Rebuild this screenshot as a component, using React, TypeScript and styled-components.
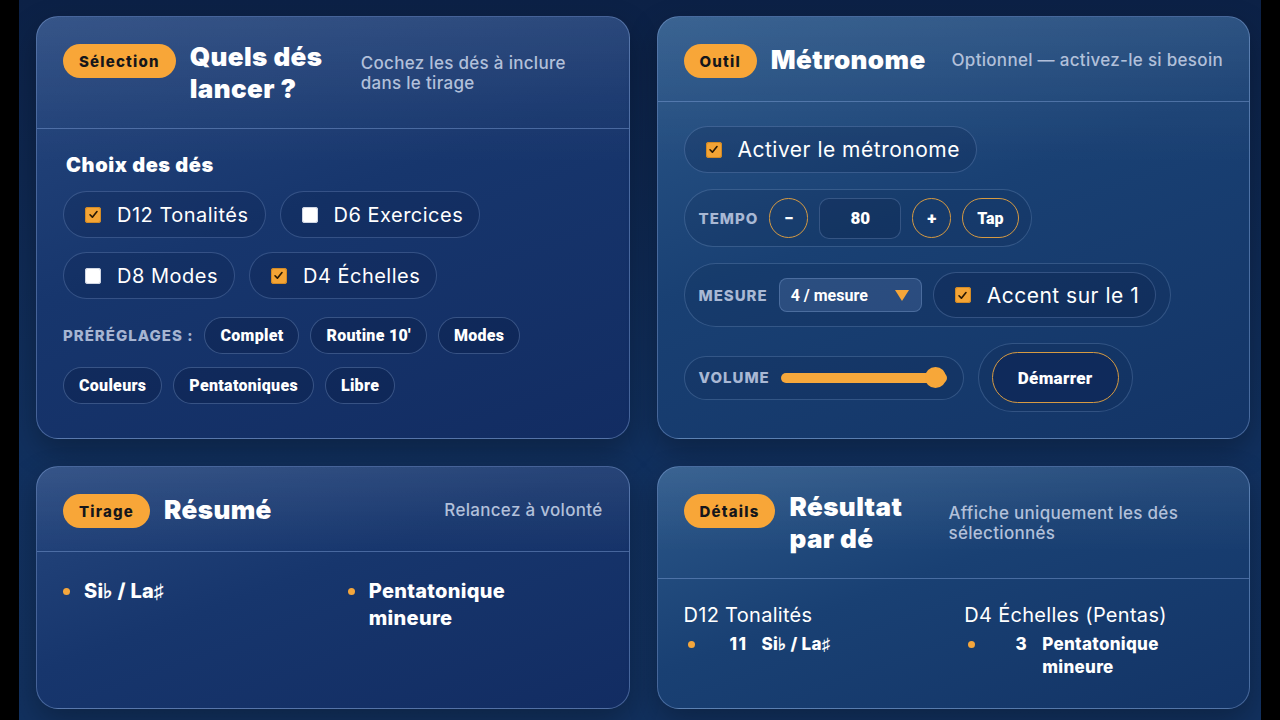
import React from 'react';
import styled, { createGlobalStyle } from 'styled-components';

const GlobalStyle = createGlobalStyle`
  html, body {
    margin: 0;
    padding: 0;
    background: #000;
  }
  body {
    font-family: Inter, "Noto Sans", sans-serif;
    color: #fff;
  }
  * {
    box-sizing: border-box;
  }
`;

const Screen = styled.div`
  width: 1242px;
  height: 720px;
  margin-left: 19px;
  overflow: hidden;
  padding: 16px 11px 0 17px;
  background: linear-gradient(180deg, #0c2146 0%, #11305e 60%, #12315f 100%);
  display: grid;
  grid-template-columns: 1fr 1fr;
  grid-template-rows: 423px 243px;
  gap: 27px;
`;

const Card = styled.section<{ $tone?: 'blue' | 'teal' }>`
  border-radius: 22px;
  border: 1px solid rgba(140, 172, 225, 0.42);
  box-shadow: 0 12px 30px rgba(0, 0, 0, 0.28);
  overflow: hidden;
  display: flex;
  flex-direction: column;
  background: ${(p) =>
    p.$tone === 'teal'
      ? 'linear-gradient(180deg, rgba(255,255,255,0.07), rgba(255,255,255,0) 35%), linear-gradient(160deg, #2c588a 0%, #194073 45%, #133466 100%)'
      : 'linear-gradient(180deg, rgba(255,255,255,0.07), rgba(255,255,255,0) 35%), linear-gradient(160deg, #27487f 0%, #17366d 45%, #122c62 100%)'};
`;

const CardHeader = styled.header`
  display: flex;
  align-items: center;
  padding: 24px 26px 23px;
  border-bottom: 1px solid rgba(130, 165, 220, 0.45);
`;

const Badge = styled.span`
  align-self: flex-start;
  flex-shrink: 0;
  height: 34px;
  padding: 0 16px;
  margin: 3px 14px 0 0;
  border-radius: 17px;
  background: #f8a638;
  color: #15161b;
  font-size: 15px;
  font-weight: 800;
  letter-spacing: 1.2px;
  display: inline-flex;
  align-items: center;
`;

const Title = styled.h2<{ $width?: number }>`
  margin: 0;
  flex: 0 0 auto;
  width: ${(p) => (p.$width ? `${p.$width}px` : 'auto')};
  font-size: 26px;
  font-weight: 900;
  line-height: 32px;
  letter-spacing: 0.4px;
  color: #fff;
`;

const Subtitle = styled.p`
  margin: 0 0 0 auto;
  padding-left: 17px;
  flex: 0 1 auto;
  font-size: 17px;
  font-weight: 500;
  line-height: 20px;
  letter-spacing: 0.3px;
  color: #b2c0da;
`;

const CardBody = styled.div<{ $pad?: string }>`
  padding: ${(p) => p.$pad || '24px 26px'};
  flex: 1;
`;

const SectionTitle = styled.h3`
  margin: 0 0 14px 3px;
  font-size: 20px;
  font-weight: 900;
  line-height: 24px;
  letter-spacing: 0.6px;
`;

const ChipWrap = styled.div`
  display: flex;
  flex-wrap: wrap;
  gap: 14px;
`;

const CheckChip = styled.label<{ $h?: number; $size?: number }>`
  display: inline-flex;
  align-items: center;
  gap: 16px;
  height: ${(p) => p.$h || 47}px;
  padding: 0 16px 0 21px;
  border-radius: 24px;
  border: 1px solid rgba(150, 182, 232, 0.26);
  background: rgba(8, 24, 60, 0.18);
  font-size: ${(p) => p.$size || 20}px;
  font-weight: 400;
  letter-spacing: 0.5px;
  color: #fff;
  white-space: nowrap;
`;

const Box = styled.span<{ $on?: boolean }>`
  width: 16px;
  height: 16px;
  border-radius: 3px;
  flex-shrink: 0;
  display: inline-flex;
  align-items: center;
  justify-content: center;
  background: ${(p) => (p.$on ? '#f4a435' : '#ffffff')};
  box-shadow: inset 0 0 0 1px ${(p) => (p.$on ? '#d38a24' : '#cfd6e4')};
`;

const Presets = styled.div`
  display: flex;
  flex-wrap: wrap;
  align-items: center;
  column-gap: 11px;
  row-gap: 13px;
  margin-top: 18px;
`;

const SmallLabel = styled.span`
  font-size: 15px;
  font-weight: 800;
  letter-spacing: 1px;
  color: #a6b5d2;
  white-space: nowrap;
`;

const PresetChip = styled.button`
  height: 37px;
  padding: 0 15px;
  border-radius: 19px;
  border: 1px solid rgba(150, 182, 232, 0.3);
  background: rgba(8, 24, 60, 0.3);
  color: #fff;
  font-family: Roboto, "Liberation Sans", sans-serif;
  font-size: 16px;
  font-weight: 900;
  letter-spacing: 0.3px;
`;

const Stack = styled.div`
  display: flex;
  flex-direction: column;
  align-items: flex-start;
  gap: 16px;
`;

const Row = styled.div`
  display: flex;
  align-items: center;
  gap: 14px;
`;

const Group = styled.div<{ $h: number; $pad?: string }>`
  display: flex;
  align-items: center;
  gap: 11px;
  height: ${(p) => p.$h}px;
  padding: ${(p) => p.$pad || '0 12px 0 14px'};
  border-radius: ${(p) => p.$h / 2}px;
  border: 1px solid rgba(150, 182, 232, 0.24);
  background: rgba(8, 24, 60, 0.12);
`;

const GroupLabel = styled.span`
  font-size: 15px;
  font-weight: 800;
  letter-spacing: 1px;
  color: #a9b8d4;
`;

const RoundButton = styled.button<{ $wide?: boolean }>`
  height: 40px;
  min-width: 39px;
  padding: 0 ${(p) => (p.$wide ? '14px' : '0')};
  border-radius: 20px;
  border: 1px solid #d69a42;
  background: transparent;
  color: #fff;
  font-family: Roboto, "Liberation Sans", sans-serif;
  font-size: ${(p) => (p.$wide ? 16 : 17)}px;
  font-weight: 900;
  display: inline-flex;
  align-items: center;
  justify-content: center;
`;

const NumberBox = styled.div`
  width: 82px;
  height: 41px;
  border-radius: 10px;
  border: 1px solid rgba(150, 182, 232, 0.26);
  background: rgba(8, 24, 60, 0.2);
  display: flex;
  align-items: center;
  justify-content: center;
  font-family: Roboto, "Liberation Sans", sans-serif;
  font-size: 17px;
  font-weight: 900;
`;

const Select = styled.div`
  width: 143px;
  height: 34px;
  border-radius: 8px;
  border: 1px solid rgba(150, 182, 232, 0.3);
  background: rgba(120, 152, 205, 0.22);
  padding: 0 11px;
  display: flex;
  align-items: center;
  justify-content: space-between;
  font-family: Roboto, "Liberation Sans", sans-serif;
  font-size: 16px;
  font-weight: 700;
`;

const Track = styled.div`
  position: relative;
  width: 166px;
  height: 10px;
  border-radius: 5px;
  background: #f6a83c;
`;

const Thumb = styled.span`
  position: absolute;
  right: 1px;
  top: 50%;
  width: 21px;
  height: 21px;
  margin-top: -10.5px;
  border-radius: 50%;
  background: #f7a739;
`;

const StartButton = styled.button`
  height: 51px;
  width: 127px;
  border-radius: 26px;
  border: 1px solid #d69a42;
  background: #0f2a5b;
  color: #fff;
  font-family: Roboto, "Liberation Sans", sans-serif;
  font-size: 17px;
  font-weight: 900;
  letter-spacing: 0.3px;
`;

const TwoCols = styled.div<{ $gap: number }>`
  display: grid;
  grid-template-columns: 1fr 1fr;
  column-gap: ${(p) => p.$gap}px;
`;

const SummaryItem = styled.div`
  display: flex;
  align-items: flex-start;
  gap: 14px;
  font-size: 20px;
  font-weight: 800;
  line-height: 27px;
  letter-spacing: 0.3px;
`;

const Dot = styled.span`
  width: 7px;
  height: 7px;
  border-radius: 50%;
  background: #f4a63c;
  flex-shrink: 0;
  margin-top: 10px;
`;

const DieName = styled.div`
  font-size: 20px;
  font-weight: 400;
  line-height: 26px;
  letter-spacing: 0.3px;
`;

const DieResult = styled.div`
  display: grid;
  grid-template-columns: 18px 46px 1fr;
  align-items: start;
  margin-top: 5px;
  font-size: 17px;
  font-weight: 800;
  line-height: 23px;
  letter-spacing: 0.3px;
`;

const ResultDot = styled(Dot)`
  margin: 8px 0 0 4px;
`;

const ResultNum = styled.span`
  text-align: right;
  letter-spacing: 1.5px;
`;

const ResultValue = styled.span`
  padding-left: 14px;
`;

const Check = ({ on }: { on?: boolean }) => (
  <Box $on={on}>
    {on && (
      <svg width="11" height="11" viewBox="0 0 12 12">
        <path d="M2.2 6.3 L4.8 8.9 L9.8 2.8" fill="none" stroke="#2a1a05" strokeWidth="1.8" strokeLinecap="round" strokeLinejoin="round" />
      </svg>
    )}
  </Box>
);

const Caret = () => (
  <svg width="16" height="13" viewBox="0 0 16 13">
    <polygon points="1,1 15,1 8,12" fill="#f6a638" />
  </svg>
);

const dice = [
  { label: 'D12 Tonalités', on: true },
  { label: 'D6 Exercices', on: false },
  { label: 'D8 Modes', on: false },
  { label: 'D4 Échelles', on: true },
];

const presets = ['Complet', 'Routine 10′', 'Modes', 'Couleurs', 'Pentatoniques', 'Libre'];

const App: React.FC = () => {
  return (
    <>
      <GlobalStyle />
      <Screen>
        <Card>
          <CardHeader>
            <Badge>Sélection</Badge>
            <Title $width={154}>Quels dés lancer ?</Title>
            <Subtitle>Cochez les dés à inclure dans le tirage</Subtitle>
          </CardHeader>
          <CardBody>
            <SectionTitle>Choix des dés</SectionTitle>
            <ChipWrap>
              {dice.map((d) => (
                <CheckChip key={d.label}>
                  <Check on={d.on} />
                  {d.label}
                </CheckChip>
              ))}
            </ChipWrap>
            <Presets>
              <SmallLabel>PRÉRÉGLAGES :</SmallLabel>
              {presets.map((p) => (
                <PresetChip key={p}>{p}</PresetChip>
              ))}
            </Presets>
          </CardBody>
        </Card>

        <Card $tone="teal">
          <CardHeader>
            <Badge>Outil</Badge>
            <Title>Métronome</Title>
            <Subtitle>Optionnel — activez-le si besoin</Subtitle>
          </CardHeader>
          <CardBody>
            <Stack>
              <CheckChip $size={21}>
                <Check on />
                Activer le métronome
              </CheckChip>
              <Group $h={58}>
                <GroupLabel>TEMPO</GroupLabel>
                <RoundButton>−</RoundButton>
                <NumberBox>80</NumberBox>
                <RoundButton>+</RoundButton>
                <RoundButton $wide>Tap</RoundButton>
              </Group>
              <Group $h={64} $pad="0 14px 0 14px">
                <GroupLabel>MESURE</GroupLabel>
                <Select>
                  4 / mesure
                  <Caret />
                </Select>
                <CheckChip $h={46} $size={21}>
                  <Check on />
                  Accent sur le 1
                </CheckChip>
              </Group>
              <Row>
                <Group $h={44} $pad="0 16px 0 14px">
                  <GroupLabel>VOLUME</GroupLabel>
                  <Track>
                    <Thumb />
                  </Track>
                </Group>
                <Group $h={69} $pad="0 13px">
                  <StartButton>Démarrer</StartButton>
                </Group>
              </Row>
            </Stack>
          </CardBody>
        </Card>

        <Card>
          <CardHeader>
            <Badge>Tirage</Badge>
            <Title>Résumé</Title>
            <Subtitle>Relancez à volonté</Subtitle>
          </CardHeader>
          <CardBody $pad="26px 26px">
            <TwoCols $gap={30}>
              <SummaryItem>
                <Dot />
                <span>Si♭ / La♯</span>
              </SummaryItem>
              <SummaryItem>
                <Dot />
                <span>
                  Pentatonique
                  <br />
                  mineure
                </span>
              </SummaryItem>
            </TwoCols>
          </CardBody>
        </Card>

        <Card $tone="teal">
          <CardHeader>
            <Badge>Détails</Badge>
            <Title $width={142}>Résultat par dé</Title>
            <Subtitle>Affiche uniquement les dés sélectionnés</Subtitle>
          </CardHeader>
          <CardBody $pad="23px 26px">
            <TwoCols $gap={22}>
              <div>
                <DieName>D12 Tonalités</DieName>
                <DieResult>
                  <ResultDot />
                  <ResultNum>11</ResultNum>
                  <ResultValue>Si♭ / La♯</ResultValue>
                </DieResult>
              </div>
              <div>
                <DieName>D4 Échelles (Pentas)</DieName>
                <DieResult>
                  <ResultDot />
                  <ResultNum>3</ResultNum>
                  <ResultValue>
                    Pentatonique
                    <br />
                    mineure
                  </ResultValue>
                </DieResult>
              </div>
            </TwoCols>
          </CardBody>
        </Card>
      </Screen>
    </>
  );
};

export default App;
